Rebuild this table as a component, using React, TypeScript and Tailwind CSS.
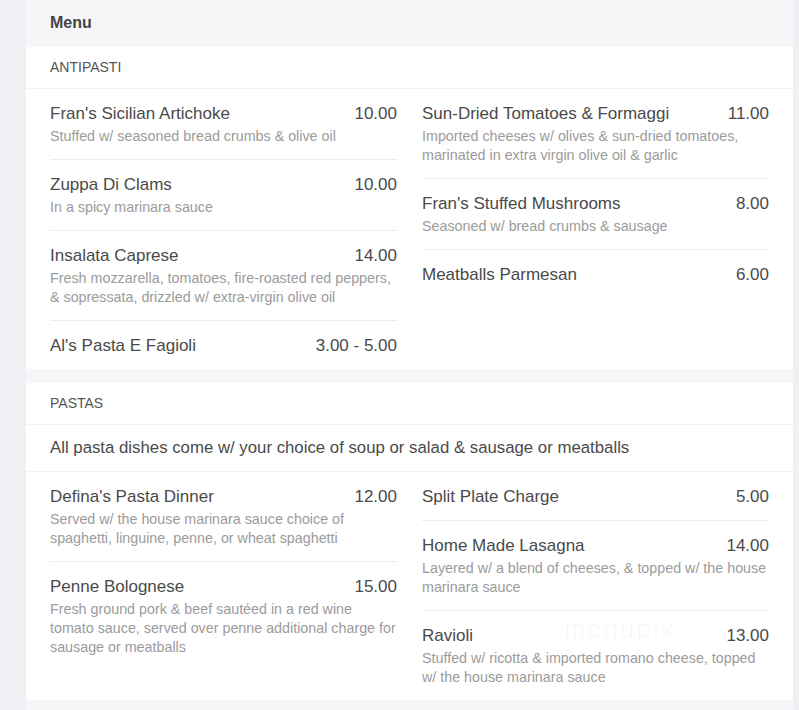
type Item = { name: string; price: string; desc?: string };

const antipastiLeft: Item[] = [
  { name: "Fran's Sicilian Artichoke", price: "10.00", desc: "Stuffed w/ seasoned bread crumbs & olive oil" },
  { name: "Zuppa Di Clams", price: "10.00", desc: "In a spicy marinara sauce" },
  {
    name: "Insalata Caprese",
    price: "14.00",
    desc: "Fresh mozzarella, tomatoes, fire-roasted red peppers, & sopressata, drizzled w/ extra-virgin olive oil",
  },
  { name: "Al's Pasta E Fagioli", price: "3.00 - 5.00" },
];

const antipastiRight: Item[] = [
  {
    name: "Sun-Dried Tomatoes & Formaggi",
    price: "11.00",
    desc: "Imported cheeses w/ olives & sun-dried tomatoes, marinated in extra virgin olive oil & garlic",
  },
  { name: "Fran's Stuffed Mushrooms", price: "8.00", desc: "Seasoned w/ bread crumbs & sausage" },
  { name: "Meatballs Parmesan", price: "6.00" },
];

const pastasLeft: Item[] = [
  {
    name: "Defina's Pasta Dinner",
    price: "12.00",
    desc: "Served w/ the house marinara sauce choice of spaghetti, linguine, penne, or wheat spaghetti",
  },
  {
    name: "Penne Bolognese",
    price: "15.00",
    desc: "Fresh ground pork & beef sautéed in a red wine tomato sauce, served over penne additional charge for sausage or meatballs",
  },
];

const pastasRight: Item[] = [
  { name: "Split Plate Charge", price: "5.00" },
  {
    name: "Home Made Lasagna",
    price: "14.00",
    desc: "Layered w/ a blend of cheeses, & topped w/ the house marinara sauce",
  },
  {
    name: "Ravioli",
    price: "13.00",
    desc: "Stuffed w/ ricotta & imported romano cheese, topped w/ the house marinara sauce",
  },
];

function MenuItem({ item, last }: { item: Item; last: boolean }) {
  const pad = item.desc ? "pb-[13px]" : "pb-[10px]";
  return (
    <div className={`pt-[12px] ${pad} ${last ? "" : "border-b border-[#ececef]"}`}>
      <div className="flex justify-between items-baseline gap-4 text-[17px] leading-[26px] text-[#4a4a4a]">
        <span>{item.name}</span>
        <span className="whitespace-nowrap">{item.price}</span>
      </div>
      {item.desc && <p className="text-[14.3px] leading-[19px] text-[#9b9b9b]">{item.desc}</p>}
    </div>
  );
}

function Column({ items }: { items: Item[] }) {
  return (
    <div className="flex flex-col">
      {items.map((it, i) => (
        <MenuItem key={it.name} item={it} last={i === items.length - 1} />
      ))}
    </div>
  );
}

export default function App() {
  return (
    <div
      className="min-h-screen bg-[#efeff4] pl-[26px] pr-[6px]"
      style={{ fontFamily: '"Liberation Sans", Arial, sans-serif' }}
    >
      <div className="bg-[#f6f6f9] min-h-screen">
        {/* Header */}
        <div className="h-[47px] px-6 flex items-center">
          <h1 className="text-[16px] font-bold text-[#444] -mt-px">Menu</h1>
        </div>

        {/* Antipasti */}
        <section className="bg-white">
          <div className="h-[42px] px-6 flex items-center border-b border-[#f0f0f3] text-[14px] text-[#555]">
            ANTIPASTI
          </div>
          <div className="grid grid-cols-2 gap-x-[25px] px-6">
            <Column items={antipastiLeft} />
            <Column items={antipastiRight} />
          </div>
        </section>

        <div className="h-[14px]" />

        {/* Pastas */}
        <section className="bg-white relative">
          <div className="h-[42px] px-6 flex items-center border-b border-[#f0f0f3] text-[14px] text-[#555]">
            PASTAS
          </div>
          <div className="h-[47px] px-6 flex items-center border-b border-[#f0f0f3] text-[16.8px] text-[#4a4a4a]">
            All pasta dishes come w/ your choice of soup or salad &amp; sausage or meatballs
          </div>
          <div className="grid grid-cols-2 gap-x-[25px] px-6">
            <Column items={pastasLeft} />
            <Column items={pastasRight} />
          </div>
          <span
            className="absolute left-[539px] top-[226px] text-[25px] font-extralight text-[#dedede] tracking-[3px] pointer-events-none"
            style={{ fontFamily: "Lato, sans-serif" }}
          >
            menupix
          </span>
        </section>
      </div>
    </div>
  );
}
